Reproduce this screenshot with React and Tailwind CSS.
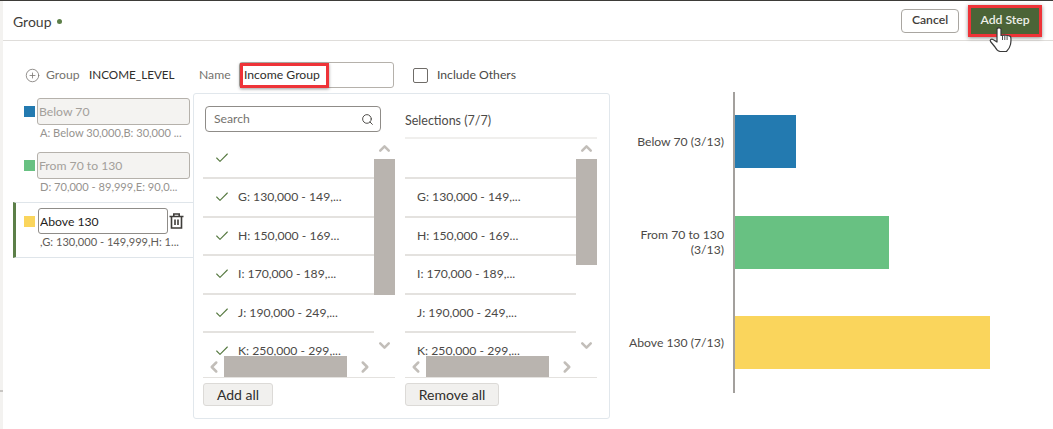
import { Check, ChevronDown, ChevronLeft, ChevronRight, ChevronUp, CirclePlus, Search } from 'lucide-react';

const font = { fontFamily: '"Lato", "Open Sans", sans-serif' };

const rows = [
  { text: '', tall: true },
  { text: 'G: 130,000 - 149,...' },
  { text: 'H: 150,000 - 169...' },
  { text: 'I: 170,000 - 189,...' },
  { text: 'J: 190,000 - 249,...' },
  { text: 'K: 250,000 - 299,...' },
];

function TrashIcon() {
  return (
    <svg width="15" height="16" viewBox="0 0 15 16" fill="none" stroke="#3f3d3a" strokeWidth="1.600" className="shrink-0">
      <path d="M.5 3.500h14M4.800 3.500V1h5.400v2.500M2.500 3.500V15h10V3.500M6 6.500v5.500M9 6.500v5.500" />
    </svg>
  );
}

function HandCursor() {
  return (
    <svg width="25" height="28" viewBox="0 0 25 28" fill="#fff" stroke="#3a3a3a" strokeWidth="1.200" strokeLinejoin="round" className="absolute left-[988px] top-[25px]">
      <path d="M9 3c0-1.500 4-1.500 4 0V9.500c2-.5 8-.5 9.500 1 .5 1 .5 5 0 8-.5 2.500-2 5-4 7H12c-2-.5-4-2.500-5-4.500L2.500 15.500c-1-1.500 1-3 2.500-2L9 16Z" />
      <path d="M14.500 9.500v4.500M16.800 9.500v4.500M19.100 9.800v4.200" fill="none" strokeWidth="0.900" />
    </svg>
  );
}

function GroupItem({ color, name, detail, height }) {
  return (
    <div className={`pt-[5px] ${height}`}>
      <div className="flex items-start pl-[11px]">
        <div className={`mt-[8px] h-[11px] w-[11px] shrink-0 ${color}`} />
        <input
          readOnly
          value={name}
          style={font}
          className="ml-[2px] h-[27px] w-[153px] rounded-[3px] border border-[#b5b1ab] bg-[#f4f3f1] px-px text-[12.200px] text-[#a3a09b] outline-none"
        />
      </div>
      <div className="truncate pl-[27px] text-[11.100px] leading-[16px] text-[#96938f]">{detail}</div>
    </div>
  );
}

function ListColumn({ thumbHeight, showChecks, header }) {
  return (
    <div className="w-[192px]">
      <div className="h-[45px]">{header}</div>
      <div className="relative h-[239px] overflow-hidden border-b border-[#e4e2df]">
        {rows.map((row, i) => (
          <div
            key={i}
            className={`flex w-[171px] items-center border-b-2 border-[#e4e2df] text-[12.200px] text-[#4c4a47] ${i === 0 ? 'h-[40px]' : 'h-[38.500px]'}`}
          >
            {showChecks ? (
              <>
                <Check size={16} strokeWidth={1.600} className="ml-[11px] shrink-0 text-[#55783f]" />
                <span className="ml-[8px]">{row.text}</span>
              </>
            ) : (
              <span className="ml-[12px]">{row.text}</span>
            )}
          </div>
        ))}
        <div className="absolute right-0 top-0 flex h-full w-[21px] flex-col items-center bg-white">
          <ChevronUp size={17} strokeWidth={3.600} className="mt-[1px] text-[#c2beb9]" />
          <div className="mt-[2px] w-full bg-[#b9b4af]" style={{ height: thumbHeight }} />
        </div>
        <ChevronDown size={17} strokeWidth={3.600} className="absolute right-[2px] top-[198px] text-[#c2beb9]" />
        <div className="absolute bottom-0 left-0 flex h-[21px] w-[171px] items-center bg-white">
          <ChevronLeft size={18} strokeWidth={3.400} className="ml-px w-[20px] shrink-0 text-[#c2beb9]" />
          <div className="h-full w-[123px] bg-[#b9b4af]" />
          <ChevronRight size={18} strokeWidth={3.400} className="ml-[9px] shrink-0 text-[#c2beb9]" />
        </div>
      </div>
    </div>
  );
}

function FooterButton({ children, width }) {
  return (
    <button className={`mt-[5px] h-[23px] rounded-[3px] border border-[#dcdad7] bg-[#f1f0ee] text-[14px] leading-none text-[#2f2e2c] ${width}`}>
      {children}
    </button>
  );
}

function Bar({ label, color, width, className = '' }) {
  return (
    <div className={`flex h-[54px] items-center ${className}`}>
      <div className="w-[114px] pr-[10px] text-right text-[12.200px] leading-[15px] text-[#4c4a47]">{label}</div>
      <div className={`h-[53px] ${color} ${width}`} />
    </div>
  );
}

export default function App() {
  return (
    <div style={font} className="relative flex h-[429px] w-[1053px] overflow-hidden border-t border-[#3d3b38] bg-white">
      <div className="w-[3px] shrink-0 bg-[#f3f2f0] pt-[389px]">
        <div className="h-[2px] bg-[#c8c6c3]" />
      </div>
      <div className="min-w-0 flex-1">
        {/* header */}
        <header className="flex h-[40px] items-center justify-between border-b border-[#dfddda] pl-[10px] pr-[11px]">
          <div className="flex items-center pt-px text-[14px] text-[#3f3d3a]">
            Group
            <span className="ml-[5px] mt-px h-[5px] w-[5px] rounded-full bg-[#5c7f48]" />
          </div>
          <div className="flex items-center gap-[9px]">
            <button className="h-[24px] w-[58px] rounded-[4px] border border-[#a9a6a1] bg-white text-[12.200px] font-semibold text-[#3f3d3a]">
              Cancel
            </button>
            <button className="h-[32px] w-[74px] border-[3px] border-[#ee3338] bg-[#4b6437] text-[12.200px] font-semibold text-[#eef0ea] shadow-[0_1px_4px_rgba(0,0,0,0.45)]">
              Add Step
            </button>
          </div>
        </header>

        {/* name row */}
        <div className="mt-[21px] flex h-[26px] items-center text-[12.200px]">
          <CirclePlus size={15} strokeWidth={1.300} className="ml-[22px] text-[#7b7874]" />
          <span className="ml-[6px] w-[43px] text-[#75726e]">Group</span>
          <span className="w-[110px] text-[11.700px] text-[#2f2e2c]">INCOME_LEVEL</span>
          <span className="w-[40px] text-[#75726e]">Name</span>
          <div className="relative h-[26px] w-[155px] rounded-[3px] border border-[#b5b1ab] bg-white">
            <div className="absolute left-0 top-0 flex h-[25px] w-[89px] items-center border-[3px] border-[#ee3338] pl-[1px] text-[#2f2e2c] shadow-[0_1px_3px_rgba(0,0,0,0.4)]">
              Income Group
            </div>
          </div>
          <div className="ml-[19px] h-[15px] w-[15px] rounded-[2px] border border-[#6f6c68]" />
          <span className="ml-[9px] text-[#4c4a47]">Include Others</span>
        </div>

        <div className="mt-[5px] flex items-start">
          {/* groups */}
          <div className="ml-[10px] w-[180px] shrink-0">
            <GroupItem color="bg-[#237ab0]" name="Below 70" detail="A: Below 30,000,B: 30,000 ..." height="h-[54px]" />
            <GroupItem color="bg-[#68c182]" name="From 70 to 130" detail="D: 70,000 - 89,999,E: 90,0..." height="h-[55px]" />
            <div className="h-[56px] border-y border-l-[3px] border-y-[#dfe5ea] border-l-[#5c7f48] pt-[5px]">
              <div className="flex items-center pl-[8px]">
                <div className="h-[11px] w-[11px] shrink-0 bg-[#fad55c]" />
                <input
                  readOnly
                  value="Above 130"
                  style={font}
                  className="ml-[3px] h-[26px] w-[130px] rounded-[3px] border border-[#8f8c88] bg-white px-px text-[12.200px] text-[#1f1e1c] outline-none"
                />
                <div className="ml-[1px]"><TrashIcon /></div>
              </div>
              <div className="truncate pl-[24px] text-[11.100px] leading-[16px] text-[#5f5c58]">,G: 130,000 - 149,999,H: 1...</div>
            </div>
          </div>

          {/* picker */}
          <div className="flex h-[326px] w-[417px] shrink-0 gap-[10px] rounded-[3px] border border-[#e1e7ec] pl-[9px]">
            <div>
              <ListColumn
                showChecks
                thumbHeight={136}
                header={
                  <div className="pl-[2px] pt-[12px]">
                    <div className="flex h-[26px] w-[176px] items-center justify-between rounded-[4px] border border-[#8f8c88] pl-[8px] pr-[6px] text-[12.200px] text-[#75726e]">
                      Search
                      <Search size={13} strokeWidth={1.800} className="text-[#4c4a47]" />
                    </div>
                  </div>
                }
              />
              <FooterButton width="w-[70px]">Add all</FooterButton>
            </div>
            <div>
              <ListColumn
                thumbHeight={106}
                header={
                  <div className="flex h-full items-center border-b-2 border-[#f0efed] pt-[11px] text-[12.500px] text-[#4c4a47]">
                    Selections (7/7)
                  </div>
                }
              />
              <FooterButton width="w-[94px]">Remove all</FooterButton>
            </div>
          </div>

          {/* chart */}
          <div className="relative h-[301px] shrink-0 pt-[21px]">
            <div className="absolute left-[123px] top-[-1px] h-[301px] w-[2px] bg-[#a3a09d]" />
            <div className="flex flex-col pl-[10px]">
              <Bar label="Below 70 (3/13)" color="bg-[#237ab0]" width="w-[62px]" />
              <Bar label={<>From 70 to 130<br />(3/13)</>} color="bg-[#68c182]" width="w-[155px]" className="mt-[47px]" />
              <Bar label="Above 130 (7/13)" color="bg-[#fad55c]" width="w-[256px]" className="mt-[46px]" />
            </div>
          </div>
        </div>
      </div>
      <HandCursor />
    </div>
  );
}
